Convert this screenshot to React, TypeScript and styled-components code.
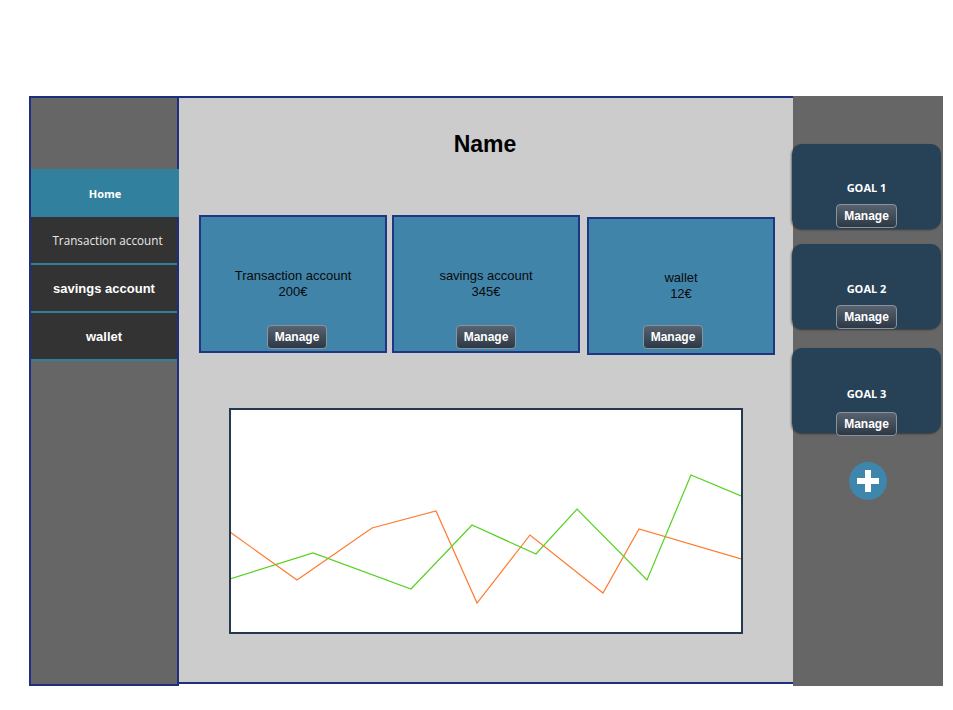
import styled, { createGlobalStyle } from "styled-components";

const GlobalStyle = createGlobalStyle`
  body {
    margin: 0;
    background: #ffffff;
    font-family: "Liberation Sans", Arial, sans-serif;
  }
`;

const Page = styled.div`
  display: flex;
  align-items: flex-start;
  padding: 96px 0 0 29px;
  width: 953px;
  height: 710px;
  box-sizing: border-box;
`;

const Sidebar = styled.nav`
  width: 150px;
  height: 590px;
  box-sizing: border-box;
  background: #666666;
  border: 2px solid #1f2f7f;
  padding-top: 71px;
  display: flex;
  flex-direction: column;
`;

const NavItem = styled.div<{ $active?: boolean; $light?: boolean }>`
  height: 48px;
  box-sizing: border-box;
  border-bottom: 2px solid #2f7f9c;
  background: ${(p) => (p.$active ? "#31809e" : "#333333")};
  color: ${(p) => (p.$light ? "#e8e8e8" : "#ffffff")};
  display: flex;
  align-items: center;
  justify-content: center;
  padding-top: ${(p) => (p.$active ? "3px" : "0")};
  padding-left: ${(p) => (p.$light ? "7px" : "0")};
  font-family: ${(p) =>
    p.$light || p.$active ? `"Open Sans", "Noto Sans", sans-serif` : `"Liberation Sans", Arial, sans-serif`};
  font-size: ${(p) => (p.$active ? "11px" : p.$light ? "11.7px" : "13px")};
  font-weight: ${(p) => (p.$light ? 400 : 700)};
  margin-right: ${(p) => (p.$active ? "-2px" : "0")};
`;

const Main = styled.main`
  width: 614px;
  height: 588px;
  box-sizing: border-box;
  background: #cccccc;
  border-top: 2px solid #1f2f7f;
  border-bottom: 2px solid #1f2f7f;
  display: flex;
  flex-direction: column;
`;

const Title = styled.h1`
  margin: 0;
  padding-top: 34px;
  padding-right: 2px;
  line-height: 24px;
  font-size: 23px;
  font-weight: 700;
  text-align: center;
  color: #000000;
`;

const CardRow = styled.div`
  display: flex;
  align-items: flex-start;
  margin-top: 59px;
  padding-left: 20px;
`;

const AccountCard = styled.div<{ $shift: number; $gap: number }>`
  width: 188px;
  height: 138px;
  box-sizing: border-box;
  background: #4184aa;
  border: 2px solid #1f3585;
  margin-top: ${(p) => p.$shift}px;
  margin-right: ${(p) => p.$gap}px;
  display: flex;
  flex-direction: column;
  align-items: center;
  padding-top: 51px;
  color: #0a0a0a;
  font-size: 13px;
  line-height: 16px;
  text-align: center;
`;

const CardSpacer = styled.div`
  flex: 1;
`;

const ManageButton = styled.button<{ $offset?: number; $bottom?: number }>`
  height: 24px;
  padding: 0 7px;
  border: 1px solid #8a939c;
  border-radius: 4px;
  background: linear-gradient(#58636f, #2c3845);
  color: #ffffff;
  font-family: "Liberation Sans", Arial, sans-serif;
  font-size: 12px;
  font-weight: 700;
  cursor: pointer;
  margin-bottom: ${(p) => p.$bottom ?? 0}px;
  transform: translateX(${(p) => p.$offset ?? 0}px);
`;

const ChartBox = styled.div`
  margin: 53px 0 0 50px;
  width: 514px;
  height: 226px;
  box-sizing: border-box;
  background: #ffffff;
  border: 2px solid #24394f;
  svg {
    display: block;
  }
`;

const GoalColumn = styled.aside`
  width: 150px;
  height: 590px;
  box-sizing: border-box;
  background: #666666;
  padding-top: 48px;
  display: flex;
  flex-direction: column;
  align-items: center;
  gap: 15px;
`;

const GoalCard = styled.div<{ $extra: number; $gap: number }>`
  width: 149px;
  height: 85px;
  margin-left: -3px;
  margin-top: ${(p) => p.$extra}px;
  box-sizing: border-box;
  background: #274257;
  border-radius: 10px;
  box-shadow: -1px 1px 2px rgba(0, 0, 0, 0.45);
  display: flex;
  flex-direction: column;
  align-items: center;
  justify-content: flex-end;
  gap: ${(p) => p.$gap}px;
  color: #ffffff;
  font-family: "Open Sans", "Noto Sans", sans-serif;
  font-size: 11px;
  font-weight: 700;
`;

const AddButton = styled.button`
  margin-top: 14px;
  margin-left: -1px;
  width: 38px;
  height: 38px;
  border-radius: 50%;
  border: none;
  background: #3f86ad;
  padding: 0;
  display: flex;
  align-items: center;
  justify-content: center;
  cursor: pointer;
`;

const accounts = [
  { name: "Transaction account", amount: "200€", shift: 0, gap: 5, offset: 4, bottom: 2 },
  { name: "savings account", amount: "345€", shift: 0, gap: 7, offset: 0, bottom: 2 },
  { name: "wallet", amount: "12€", shift: 2, gap: 0, offset: -8, bottom: 4 },
];

const goals = [
  { label: "GOAL 1", extra: 0, bottom: 1, gap: 9 },
  { label: "GOAL 2", extra: 0, bottom: 0, gap: 9 },
  { label: "GOAL 3", extra: 4, bottom: -3, gap: 11 },
];

const orange = [
  [-1, 122], [66, 170], [141, 118], [205, 101], [246, 193], [299, 125], [372, 183], [408, 119], [510, 149],
];
const green = [
  [-1, 169], [82, 143], [180, 179], [241, 115], [305, 144], [346, 99], [416, 170], [460, 65], [510, 86],
];

const toPoints = (pts: number[][]) => pts.map(([x, y]) => `${x},${y}`).join(" ");

export default function App() {
  return (
    <>
      <GlobalStyle />
      <Page>
        <Sidebar>
          <NavItem $active>Home</NavItem>
          <NavItem $light>Transaction account</NavItem>
          <NavItem>savings account</NavItem>
          <NavItem>wallet</NavItem>
        </Sidebar>
        <Main>
          <Title>Name</Title>
          <CardRow>
            {accounts.map((a) => (
              <AccountCard key={a.name} $shift={a.shift} $gap={a.gap}>
                <div>{a.name}</div>
                <div>{a.amount}</div>
                <CardSpacer />
                <ManageButton $offset={a.offset} $bottom={a.bottom}>Manage</ManageButton>
              </AccountCard>
            ))}
          </CardRow>
          <ChartBox>
            <svg width="510" height="222" viewBox="0 0 510 222">
              <polyline points={toPoints(orange)} fill="none" stroke="#ff7b2e" strokeWidth="1.2" />
              <polyline points={toPoints(green)} fill="none" stroke="#55d11f" strokeWidth="1.2" />
            </svg>
          </ChartBox>
        </Main>
        <GoalColumn>
          {goals.map((g) => (
            <GoalCard key={g.label} $extra={g.extra} $gap={g.gap}>
              <div>{g.label}</div>
              <ManageButton $bottom={g.bottom}>Manage</ManageButton>
            </GoalCard>
          ))}
          <AddButton aria-label="add goal">
            <svg width="24" height="24" viewBox="0 0 24 24">
              <rect x="9" y="1" width="6" height="22" fill="#ffffff" />
              <rect x="1" y="9" width="22" height="6" fill="#ffffff" />
            </svg>
          </AddButton>
        </GoalColumn>
      </Page>
    </>
  );
}
